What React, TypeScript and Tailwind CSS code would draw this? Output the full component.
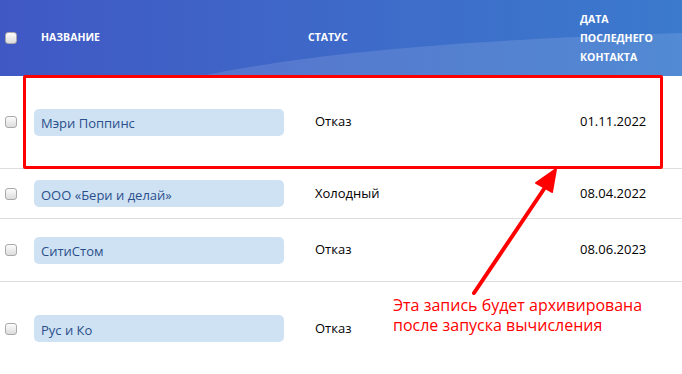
import React from "react";

type Row = { name: string; status: string; date: string; h: string };

const rows: Row[] = [
  { name: "Мэри Поппинс", status: "Отказ", date: "01.11.2022", h: "h-[93px]" },
  { name: "ООО «Бери и делай»", status: "Холодный", date: "08.04.2022", h: "h-[50px]" },
  { name: "СитиСтом", status: "Отказ", date: "08.06.2023", h: "h-[63px]" },
  { name: "Рус и Ко", status: "Отказ", date: "", h: "h-[93px]" },
];

function Check() {
  return (
    <span className="block h-[12px] w-[12px] rounded-[3px] border border-[#a9a9a9] bg-gradient-to-b from-[#fdfdfd] to-[#dcdcdc]" />
  );
}

export default function App() {
  return (
    <div
      className="relative h-[374px] w-[682px] overflow-hidden bg-white"
      style={{ fontFamily: '"Open Sans", "Liberation Sans", sans-serif' }}
    >
      {/* header */}
      <div className="relative flex h-[76px] items-center bg-gradient-to-r from-[#4058c4] to-[#3b7acd] text-[10.5px] font-bold uppercase text-white">
        <svg className="absolute inset-0" width="682" height="76" viewBox="0 0 682 76">
          <path d="M200 76 C 320 52, 460 40, 682 33 L682 76 Z" fill="#ffffff" fillOpacity="0.12" />
        </svg>
        <div className="relative w-[41px] pl-[5px]">
          <Check />
        </div>
        <div className="relative w-[267px]">Название</div>
        <div className="relative w-[272px]">Статус</div>
        <div className="relative leading-[19px]">
          Дата
          <br />
          последнего
          <br />
          контакта
        </div>
      </div>

      {/* rows */}
      {rows.map((r, i) => (
        <div
          key={i}
          className={`flex items-center ${r.h} ${i < rows.length - 1 ? "border-b border-[#dedede]" : ""}`}
        >
          <div className="w-[34px] pl-[5px]">
            <Check />
          </div>
          <div className="w-[281px]">
            <div className="flex h-[27px] w-[250px] items-center rounded-[5px] bg-[#cfe2f3] pl-[7px] pt-[4px] text-[13px] text-[#2b4f8c]">
              {r.name}
            </div>
          </div>
          <div className="w-[265px] text-[13px] text-black">{r.status}</div>
          <div className="text-[13px] text-black">{r.date}</div>
        </div>
      ))}

      {/* annotation */}
      <div className="absolute left-[23px] top-[75px] h-[94px] w-[640px] rounded-[2px] border-[3px] border-[#ff0000]" />
      <svg className="absolute left-0 top-0" width="682" height="374" viewBox="0 0 682 374">
        <line x1="474" y1="293" x2="546" y2="186" stroke="#ff0000" strokeWidth="4" strokeLinecap="round" />
        <path d="M556 169 L536 183 L552 192 Z" fill="#ff0000" stroke="#ff0000" strokeWidth="2" strokeLinejoin="round" />
      </svg>
      <div className="absolute left-[393px] top-[295px] text-[16px] leading-[20px] text-[#ff0000]">
        Эта запись будет архивирована
        <br />
        после запуска вычисления
      </div>
    </div>
  );
}
